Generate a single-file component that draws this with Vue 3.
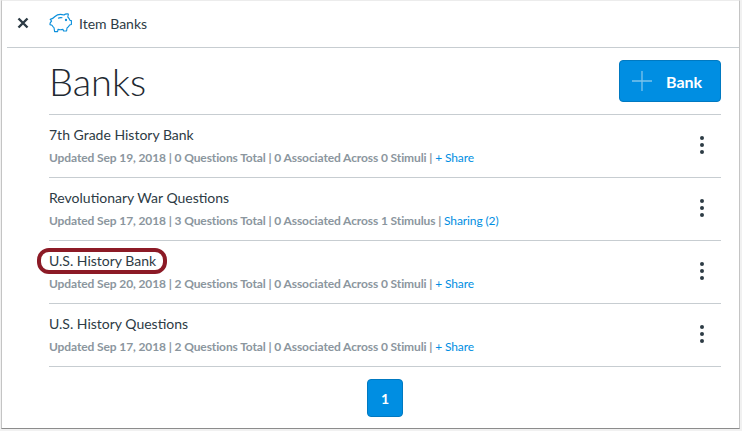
<template>
  <div class="frame">
    <header class="top-bar">
      <svg class="close-icon" width="12" height="12" viewBox="0 0 12 12">
        <path d="M1.5 1.5 L10.5 10.5 M10.5 1.5 L1.5 10.5" stroke="#2d3b45" stroke-width="2.4" fill="none" />
      </svg>
      <svg class="pig-icon" width="23" height="20" viewBox="0 0 23 20" fill="none" stroke="#0a8fdc" stroke-width="1.1" stroke-linejoin="round">
        <path d="M6 3.5 C8 1.6 12 1 15 2 C16 1 18 .8 19.4 1 L18.8 4 C20 5 20.6 6 21 7.4 L22.4 7.6 L22.4 11.4 L20.6 12 C20 13.4 19 14.4 18 15 L17.6 18 L14.6 18 L14 16.4 C12 16.8 10.6 16.8 9 16.4 L8.6 18.6 L5.6 18.6 L5 14.6 C4 14 3.6 13.2 3 12.2 L1 11.6 C.6 10 1.6 9 2.6 8 L1.2 6.4 C3 6 4.6 5 6 3.5 Z" />
        <path d="M9 5.2 C10.4 4.6 12 4.5 13.4 4.8" />
        <circle cx="17" cy="7" r=".6" />
      </svg>
      <span class="crumb">Item Banks</span>
    </header>

    <main class="content">
      <div class="title-row">
        <h1 class="page-title">Banks</h1>
        <button class="add-btn">
          <svg width="20" height="20" viewBox="0 0 20 20">
            <path d="M10 0 V20 M0 10 H20" stroke="#7cc4ec" stroke-width="1.3" fill="none" />
          </svg>
          <span>Bank</span>
        </button>
      </div>

      <ul class="bank-list">
        <li v-for="bank in banks" :key="bank.name" class="bank-row">
          <div class="bank-info">
            <div class="bank-name" :class="{ marked: bank.marked }">{{ bank.name }}</div>
            <div class="bank-meta">
              {{ bank.meta }} | <a class="share">{{ bank.share }}</a>
            </div>
          </div>
          <div class="kebab"><i></i><i></i><i></i></div>
        </li>
      </ul>

      <div class="pagination">
        <button class="page-btn">1</button>
      </div>
    </main>
  </div>
</template>

<script setup>
const banks = [
  {
    name: '7th Grade History Bank',
    meta: 'Updated Sep 19, 2018 | 0 Questions Total | 0 Associated Across 0 Stimuli',
    share: '+ Share'
  },
  {
    name: 'Revolutionary War Questions',
    meta: 'Updated Sep 17, 2018 | 3 Questions Total | 0 Associated Across 1 Stimulus',
    share: 'Sharing (2)'
  },
  {
    name: 'U.S. History Bank',
    meta: 'Updated Sep 20, 2018 | 2 Questions Total | 0 Associated Across 0 Stimuli',
    share: '+ Share',
    marked: true
  },
  {
    name: 'U.S. History Questions',
    meta: 'Updated Sep 17, 2018 | 2 Questions Total | 0 Associated Across 0 Stimuli',
    share: '+ Share'
  }
]
</script>

<style>
html,
body {
  margin: 0;
  background: #f1f1f1;
}
</style>

<style scoped>
.frame {
  box-sizing: border-box;
  width: 739px;
  height: 429px;
  margin-left: 1px;
  background: #fff;
  border-top: 1px solid #ececec;
  border-left: 1px solid #c4c4c4;
  border-right: 1px solid #c4c4c4;
  border-bottom: 1px solid #8c8c8c;
  font-family: Lato, "Liberation Sans", sans-serif;
  color: #2d3b45;
}

.top-bar {
  display: flex;
  align-items: center;
  height: 47px;
  margin-left: 5px;
  padding-bottom: 2px;
  border-bottom: 1px solid #c7cdd1;
  box-sizing: border-box;
}

.close-icon {
  margin-left: 10px;
}

.pig-icon {
  margin-left: 20px;
}

.crumb {
  margin-left: 7px;
  font-size: 14px;
}

.content {
  padding: 0 18px 0 47px;
}

.title-row {
  display: flex;
  justify-content: space-between;
  align-items: center;
  height: 66px;
  border-bottom: 1px solid #c7cdd1;
}

.page-title {
  margin: 0;
  font-size: 38px;
  font-weight: 300;
  color: #1f2a32;
}

.add-btn {
  display: flex;
  align-items: center;
  gap: 14px;
  box-sizing: border-box;
  width: 102px;
  height: 42px;
  padding: 0 0 0 12px;
  background: #008ee2;
  border: 1px solid #0079c1;
  border-radius: 4px;
  color: #fff;
  font-family: inherit;
  font-size: 16px;
  font-weight: 700;
}

.bank-list {
  margin: 0;
  padding: 0;
  list-style: none;
}

.bank-row {
  display: flex;
  justify-content: space-between;
  align-items: center;
  height: 63px;
  box-sizing: border-box;
  border-bottom: 1px solid #c7cdd1;
}

.bank-name {
  position: relative;
  font-size: 14px;
  line-height: 18px;
  margin-top: -2px;
}

.bank-name.marked::before {
  content: "";
  position: absolute;
  left: -12px;
  top: -4px;
  width: 130px;
  height: 26px;
  box-sizing: border-box;
  border: 4px solid #8c1a26;
  border-radius: 12px;
}

.bank-meta {
  margin-top: 6px;
  font-size: 12px;
  line-height: 15px;
  font-weight: 700;
  letter-spacing: -0.11px;
  color: #8b969e;
}

.share {
  color: #008ee2;
  font-weight: 400;
}

.kebab {
  display: flex;
  flex-direction: column;
  gap: 3px;
  margin-right: 17px;
  margin-top: -2px;
}

.kebab i {
  width: 4px;
  height: 4px;
  border-radius: 50%;
  background: #2d3b45;
}

.pagination {
  display: flex;
  justify-content: center;
  padding-top: 12px;
}

.page-btn {
  box-sizing: border-box;
  width: 36px;
  height: 38px;
  background: #008ee2;
  border: 1px solid #0079c1;
  border-radius: 4px;
  color: #fff;
  font-family: inherit;
  font-size: 14px;
  font-weight: 700;
}
</style>
